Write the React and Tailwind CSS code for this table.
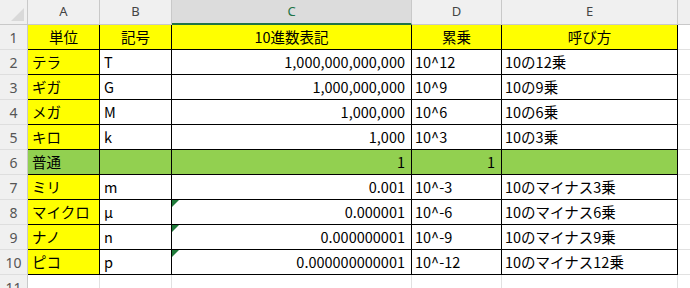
import React from "react";

const COLS = [
  { key: "A", w: "w-[72px]" },
  { key: "B", w: "w-[72px]" },
  { key: "C", w: "w-[240px]" },
  { key: "D", w: "w-[90px]" },
  { key: "E", w: "w-[176px]" },
];

const rows = [
  { a: "単位", b: "記号", c: "10進数表記", d: "累乗", e: "呼び方", header: true },
  { a: "テラ", b: "T", c: "1,000,000,000,000", d: "10^12", e: "10の12乗" },
  { a: "ギガ", b: "G", c: "1,000,000,000", d: "10^9", e: "10の9乗" },
  { a: "メガ", b: "M", c: "1,000,000", d: "10^6", e: "10の6乗" },
  { a: "キロ", b: "k", c: "1,000", d: "10^3", e: "10の3乗" },
  { a: "普通", b: "", c: "1", d: "1", e: "", green: true },
  { a: "ミリ", b: "m", c: "0.001", d: "10^-3", e: "10のマイナス3乗" },
  { a: "マイクロ", b: "μ", c: "0.000001", d: "10^-6", e: "10のマイナス6乗", tri: true },
  { a: "ナノ", b: "n", c: "0.000000001", d: "10^-9", e: "10のマイナス9乗", tri: true },
  { a: "ピコ", b: "p", c: "0.000000000001", d: "10^-12", e: "10のマイナス12乗", tri: true },
];

const font = { fontFamily: '"Noto Sans CJK JP", "Noto Sans", sans-serif' };

function Tri() {
  return (
    <svg className="absolute left-0 top-0" width="7" height="7" viewBox="0 0 7 7">
      <polygon points="0,0 7,0 0,7" fill="#1f7a3a" />
    </svg>
  );
}

export default function App() {
  return (
    <div className="w-[690px] h-[288px] overflow-hidden bg-white text-black" style={font}>
      {/* column header */}
      <div className="flex h-[25px]">
        <div className="relative w-[28px] shrink-0 bg-[#f0f0f0] border-r border-b border-[#c9c9c9]">
          <svg className="absolute left-[11px] top-[8px]" width="13" height="13" viewBox="0 0 13 13">
            <polygon points="13,0 13,13 0,13" fill="#d9d9d9" />
          </svg>
        </div>
        {COLS.map((c) =>
          c.key === "C" ? (
            <div
              key={c.key}
              className={`${c.w} shrink-0 flex items-center justify-center bg-[#dcdcdc] border-r border-[#c9c9c9] border-b-2 border-b-[#217346] text-[13px] text-[#217346]`}
              style={{ fontFamily: '"Noto Sans", sans-serif' }}
            >
              {c.key}
            </div>
          ) : (
            <div
              key={c.key}
              className={`${c.w} shrink-0 flex items-center justify-center bg-[#f0f0f0] border-r border-b border-[#c9c9c9] text-[13px] text-[#444]`}
              style={{ fontFamily: '"Noto Sans", sans-serif' }}
            >
              {c.key}
            </div>
          )
        )}
        <div className="flex-1 bg-[#f0f0f0] border-b border-[#c9c9c9]" />
      </div>

      {rows.map((r, i) => {
        const rowBg = r.header ? "bg-[#ffff00]" : r.green ? "bg-[#92d050]" : "bg-white";
        const aBg = r.green ? "bg-[#92d050]" : "bg-[#ffff00]";
        return (
          <div key={i} className="flex h-[25px] text-[14.5px]">
            <div
              className="w-[28px] shrink-0 flex items-center justify-center bg-[#f0f0f0] border-r border-b border-[#c9c9c9] border-b-[#dedede] text-[14px] text-[#555]"
              style={{ fontFamily: '"Noto Sans", sans-serif' }}
            >
              {i + 1}
            </div>
            <div className={`w-[72px] shrink-0 flex items-center ${r.header ? "justify-center" : "pl-[4px]"} ${aBg} border-r border-b border-black`}>
              {r.a}
            </div>
            <div className={`w-[72px] shrink-0 flex items-center ${r.header ? "justify-center" : "pl-[4px]"} ${rowBg} border-r border-b border-black`}>
              {r.b}
            </div>
            <div className={`relative w-[240px] shrink-0 flex items-center ${r.header ? "justify-center" : "justify-end pr-[6px]"} ${rowBg} border-r border-b border-black`}>
              {r.tri && <Tri />}
              {r.c}
            </div>
            <div className={`w-[90px] shrink-0 flex items-center ${r.header ? "justify-center" : r.green ? "justify-end pr-[6px]" : "pl-[3px]"} ${rowBg} border-r border-b border-black`}>
              {r.d}
            </div>
            <div className={`w-[176px] shrink-0 flex items-center ${r.header ? "justify-center" : "pl-[3px]"} ${rowBg} border-r border-b border-black`}>
              {r.e}
            </div>
            <div className="flex-1 border-b border-[#e1e1e1]" />
          </div>
        );
      })}

      <div className="flex h-[25px]">
        <div
          className="w-[28px] shrink-0 flex items-center justify-center bg-[#f0f0f0] border-r border-[#c9c9c9] text-[14px] text-[#555]"
          style={{ fontFamily: '"Noto Sans", sans-serif' }}
        >
          11
        </div>
        {COLS.map((c) => (
          <div key={c.key} className={`${c.w} shrink-0 border-r border-[#e1e1e1]`} />
        ))}
        <div className="flex-1" />
      </div>
    </div>
  );
}
